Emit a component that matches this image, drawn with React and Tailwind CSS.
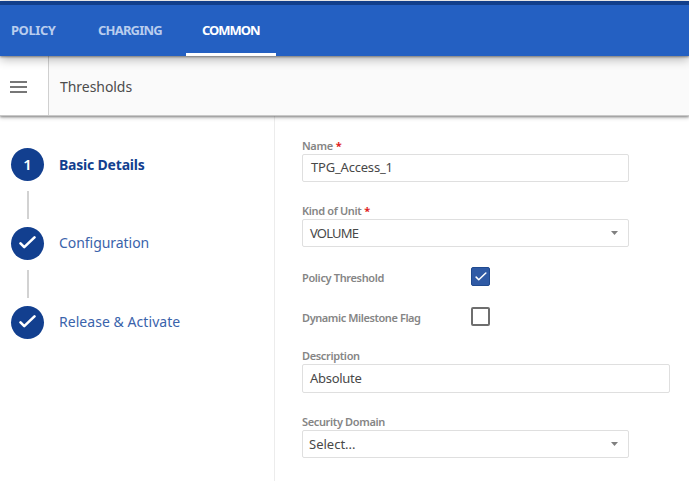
import React from "react";

function Tick({ className, width = 2 }) {
  return (
    <svg viewBox="0 0 18 14" className={className} fill="none" stroke="white" strokeWidth={width} strokeLinecap="round" strokeLinejoin="round">
      <path d="M1.5 8 5.5 12 16.5 1.5" />
    </svg>
  );
}

function Step({ number, label, className = "" }) {
  return (
    <div className="flex h-[33px] items-center">
      <div className="flex size-[33px] shrink-0 items-center justify-center rounded-full bg-[#123f8f] text-[15px] font-semibold text-white">
        {number ? <span>{number}</span> : <Tick className="mb-[3px] h-[13px] w-[17px]" width={2.8} />}
      </div>
      <span className={`ml-[15px] whitespace-nowrap ${className}`}>{label}</span>
    </div>
  );
}

function Connector() {
  return <div className="mt-[10px] mb-[8px] ml-[16px] h-[28px] w-[2px] bg-[#d2d2d2]" />;
}

function Label({ children, required, className = "" }) {
  return (
    <div className={`flex h-[16px] items-center whitespace-nowrap text-[11px] font-semibold tracking-[-0.35px] text-[#858585] ${className}`}>
      <span>{children}</span>
      {required && <span className="ml-[3px] font-bold text-[#e02020]">*</span>}
    </div>
  );
}

function Box({ children, select, className = "" }) {
  return (
    <div className={`flex items-center justify-between rounded-[2px] border border-[#dfdfdf] bg-white pr-[10px] text-[13px] text-[#484848] ${className}`}>
      {children}
      {select && (
        <svg viewBox="0 0 7 4" className="h-[4px] w-[7px]" fill="#808080">
          <path d="M0 0h7L3.5 4z" />
        </svg>
      )}
    </div>
  );
}

export default function App() {
  return (
    <div className="h-[481px] w-[689px] overflow-hidden bg-white pt-px font-['Noto_Sans',sans-serif]">
      <header className="relative z-20 flex h-[55px] border-t-4 border-[#123f8b] bg-[#2460c2] text-[13px] font-bold text-[#b9cdee] shadow-[0_1px_2px_rgba(0,0,0,0.4),0_3px_10px_rgba(0,0,0,0.3)]">
        <div className="w-[87px] pt-[16px] pl-[11px] tracking-[-0.45px]">POLICY</div>
        <div className="w-[99px] pt-[16px] pl-[11px] tracking-[-0.8px]">CHARGING</div>
        <div className="w-[90px] border-b-3 border-white pt-[16px] pl-[16px] tracking-[-1.05px] text-white">COMMON</div>
      </header>
      <div className="relative z-10 flex h-[60px] border-b border-[#c8c8c8] bg-[#fafafa] shadow-[0_1px_2px_rgba(0,0,0,0.35),0_2px_4px_rgba(0,0,0,0.2)]">
        <div className="flex w-[49px] flex-col gap-[3px] border-r border-[#d0d0d0] bg-white pt-[25px] pl-[10px]">
          <div className="h-[2px] w-[17px] bg-[#777]" />
          <div className="h-[2px] w-[17px] bg-[#777]" />
          <div className="h-[2px] w-[17px] bg-[#777]" />
        </div>
        <div className="flex items-center pb-px pl-[11px] text-[14px] tracking-[-0.05px] text-[#4c4c4c]">
          <span className="pt-[3px]">Thresholds</span>
        </div>
      </div>
      <main className="flex h-[365px]">
        <aside className="w-[275px] shrink-0 border-r border-[#ececec] pt-[32px] pl-[11px] text-[14px] text-[#3a63ab]">
          <Step number="1" label="Basic Details" className="font-bold tracking-[-0.2px] text-[#123f8f]" />
          <Connector />
          <Step label="Configuration" className="pb-[3px] tracking-[-0.05px]" />
          <Connector />
          <Step label="Release & Activate" className="pb-[3px] tracking-[0.05px]" />
        </aside>
        <section className="flex flex-col items-start pt-[22px] pl-[27px]">
          <Label required>Name</Label>
          <Box className="h-[28px] w-[327px] pl-[8px]"><span className="tracking-[-0.2px]">TPG_Access_1</span></Box>
          <Label required className="mt-[21px]">Kind of Unit</Label>
          <Box select className="h-[28px] w-[327px] pl-[7px]"><span className="pt-[2px] tracking-[-0.8px]">VOLUME</span></Box>
          <div className="mt-[20px] flex h-[19px] items-center">
            <Label className="w-[169px] pt-[3px]">Policy Threshold</Label>
            <div className="flex size-[19px] items-center justify-center rounded-[2px] border border-[#204a8f] bg-[#2f5aa5]">
              <Tick className="h-[9px] w-[12px]" width={2.4} />
            </div>
          </div>
          <div className="mt-[21px] flex h-[19px] items-center">
            <Label className="w-[169px] pt-[3px] tracking-[-0.42px]">Dynamic Milestone Flag</Label>
            <div className="size-[19px] rounded-[2px] border-2 border-[#6e6e6e]" />
          </div>
          <Label className="mt-[22px]">Description</Label>
          <Box className="h-[29px] w-[368px] pl-[7px]"><span className="tracking-[-0.3px]">Absolute</span></Box>
          <Label className="mt-[21px]">Security Domain</Label>
          <Box select className="h-[28px] w-[327px] pl-[6px]"><span className="pt-px">Select...</span></Box>
        </section>
      </main>
    </div>
  );
}
